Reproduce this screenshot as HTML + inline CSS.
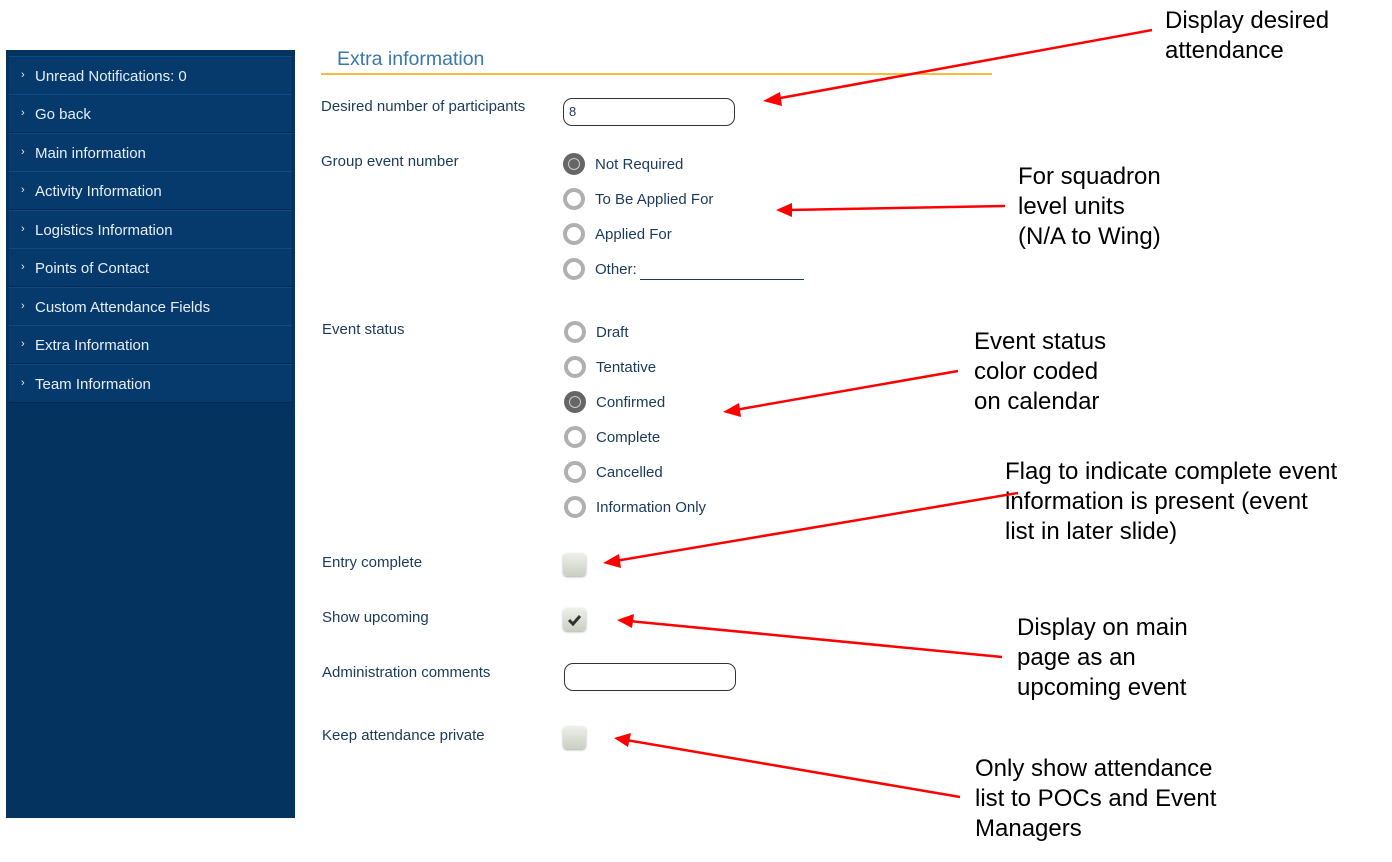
<!DOCTYPE html>
<html><head><meta charset="utf-8"><style>
body{margin:0;width:1392px;height:862px;background:#fff;position:relative;font-family:"Liberation Sans",sans-serif;overflow:hidden}
.sb{position:absolute;left:6px;top:50px;width:289px;height:768px;background:#04335f}
.it{position:absolute;left:3px;width:283px;height:37px;background:#063a6d;border-top:1px solid #0d4a82;border-bottom:1px solid #022a50;color:#e6eef6;font-size:15px;line-height:40px}
.it span{position:absolute;left:12px;font-size:11px;top:-2px}
.it b{font-weight:normal;position:absolute;left:26px}
.t{position:absolute;font-size:15px;color:#1c3a5a;margin-top:1px}
.r{position:absolute;width:14px;height:14px;border-radius:50%;border:4px solid #b0b0b0;background:#fff}
.r.on{border-color:#666;background:#666}
.r.on::after{content:"";position:absolute;width:12px;height:12px;border-radius:50%;border:1.5px solid #ccc;box-sizing:border-box;left:1px;top:1px}
.cb{position:absolute;width:23px;height:23px;border-radius:4px;background:linear-gradient(#eef0ea,#c9d0c2);box-shadow:0 1px 2px #aaa}
.in{position:absolute;border:1.5px solid #333;border-radius:9px;background:#fff;box-sizing:border-box}
.a{position:absolute;font-size:24px;color:#000;line-height:30px}
</style></head><body>
<div class="sb">
<div class="it" style="top:6px"><span>›</span><b>Unread Notifications: 0</b></div>
<div class="it" style="top:44px"><span>›</span><b>Go back</b></div>
<div class="it" style="top:83px"><span>›</span><b>Main information</b></div>
<div class="it" style="top:121px"><span>›</span><b>Activity Information</b></div>
<div class="it" style="top:160px"><span>›</span><b>Logistics Information</b></div>
<div class="it" style="top:198px"><span>›</span><b>Points of Contact</b></div>
<div class="it" style="top:237px"><span>›</span><b>Custom Attendance Fields</b></div>
<div class="it" style="top:275px"><span>›</span><b>Extra Information</b></div>
<div class="it" style="top:314px"><span>›</span><b>Team Information</b></div>
</div>
<div style="position:absolute;left:337px;top:48px;font-size:19.5px;color:#3a78a8">Extra information</div>
<div style="position:absolute;left:321px;top:73px;width:671px;height:2px;background:#f5bd3c"></div>
<div class="t" style="left:321px;top:97px">Desired number of participants</div>
<div class="in" style="left:563px;top:98px;width:172px;height:28px"><span style="position:absolute;left:5px;top:5px;font-size:13px;color:#1c3a5a">8</span></div>
<div class="t" style="left:321px;top:152px">Group event number</div>
<div class="r on" style="left:563px;top:153px"></div><div class="t" style="left:595px;top:155px">Not Required</div>
<div class="r" style="left:563px;top:188px"></div><div class="t" style="left:595px;top:190px">To Be Applied For</div>
<div class="r" style="left:563px;top:223px"></div><div class="t" style="left:595px;top:225px">Applied For</div>
<div class="r" style="left:563px;top:258px"></div><div class="t" style="left:595px;top:260px">Other:</div>
<div style="position:absolute;left:640px;top:279px;width:164px;height:1px;background:#1c3a5a"></div>
<div class="t" style="left:322px;top:320px">Event status</div>
<div class="r" style="left:564px;top:321px"></div><div class="t" style="left:596px;top:323px">Draft</div>
<div class="r" style="left:564px;top:356px"></div><div class="t" style="left:596px;top:358px">Tentative</div>
<div class="r on" style="left:564px;top:391px"></div><div class="t" style="left:596px;top:393px">Confirmed</div>
<div class="r" style="left:564px;top:426px"></div><div class="t" style="left:596px;top:428px">Complete</div>
<div class="r" style="left:564px;top:461px"></div><div class="t" style="left:596px;top:463px">Cancelled</div>
<div class="r" style="left:564px;top:496px"></div><div class="t" style="left:596px;top:498px">Information Only</div>
<div class="t" style="left:322px;top:553px">Entry complete</div>
<div class="cb" style="left:563px;top:553px"></div>
<div class="t" style="left:322px;top:608px">Show upcoming</div>
<div class="cb" style="left:563px;top:608px"><svg width="23" height="23"><path d="M6 12l4 4 7-8" stroke="#333" stroke-width="3" fill="none"/></svg></div>
<div class="t" style="left:322px;top:663px">Administration comments</div>
<div class="in" style="left:564px;top:663px;width:172px;height:28px"></div>
<div class="t" style="left:322px;top:726px">Keep attendance private</div>
<div class="cb" style="left:563px;top:726px"></div>
<svg style="position:absolute;left:0;top:0" width="1392" height="862">
<g fill="#f00" stroke="#f00" stroke-width="2.5">
<line x1="1152" y1="30" x2="775" y2="99"/><polygon stroke="none" points="763,101 780,92 782,106"/>
<line x1="1005" y1="206" x2="788" y2="210"/><polygon stroke="none" points="776,210 792,203 792,217"/>
<line x1="958" y1="371" x2="735" y2="410"/><polygon stroke="none" points="723,412 739,403 741,417"/>
<line x1="1018" y1="493" x2="615" y2="561"/><polygon stroke="none" points="603,563 619,554 621,568"/>
<line x1="1002" y1="657" x2="629" y2="621"/><polygon stroke="none" points="617,620 634,614 632,628"/>
<line x1="960" y1="797" x2="626" y2="740"/><polygon stroke="none" points="614,738 631,733 628,747"/>
</g></svg>
<div class="a" style="left:1165px;top:6px">Display desired<br>attendance</div>
<div class="a" style="left:1018px;top:162px">For squadron<br>level units<br>(N/A to Wing)</div>
<div class="a" style="left:974px;top:327px">Event status<br>color coded<br>on calendar</div>
<div class="a" style="left:1005px;top:457px">Flag to indicate complete event<br>information is present (event<br>list in later slide)</div>
<div class="a" style="left:1017px;top:613px">Display on main<br>page as an<br>upcoming event</div>
<div class="a" style="left:975px;top:754px">Only show attendance<br>list to POCs and Event<br>Managers</div>
</body></html>
